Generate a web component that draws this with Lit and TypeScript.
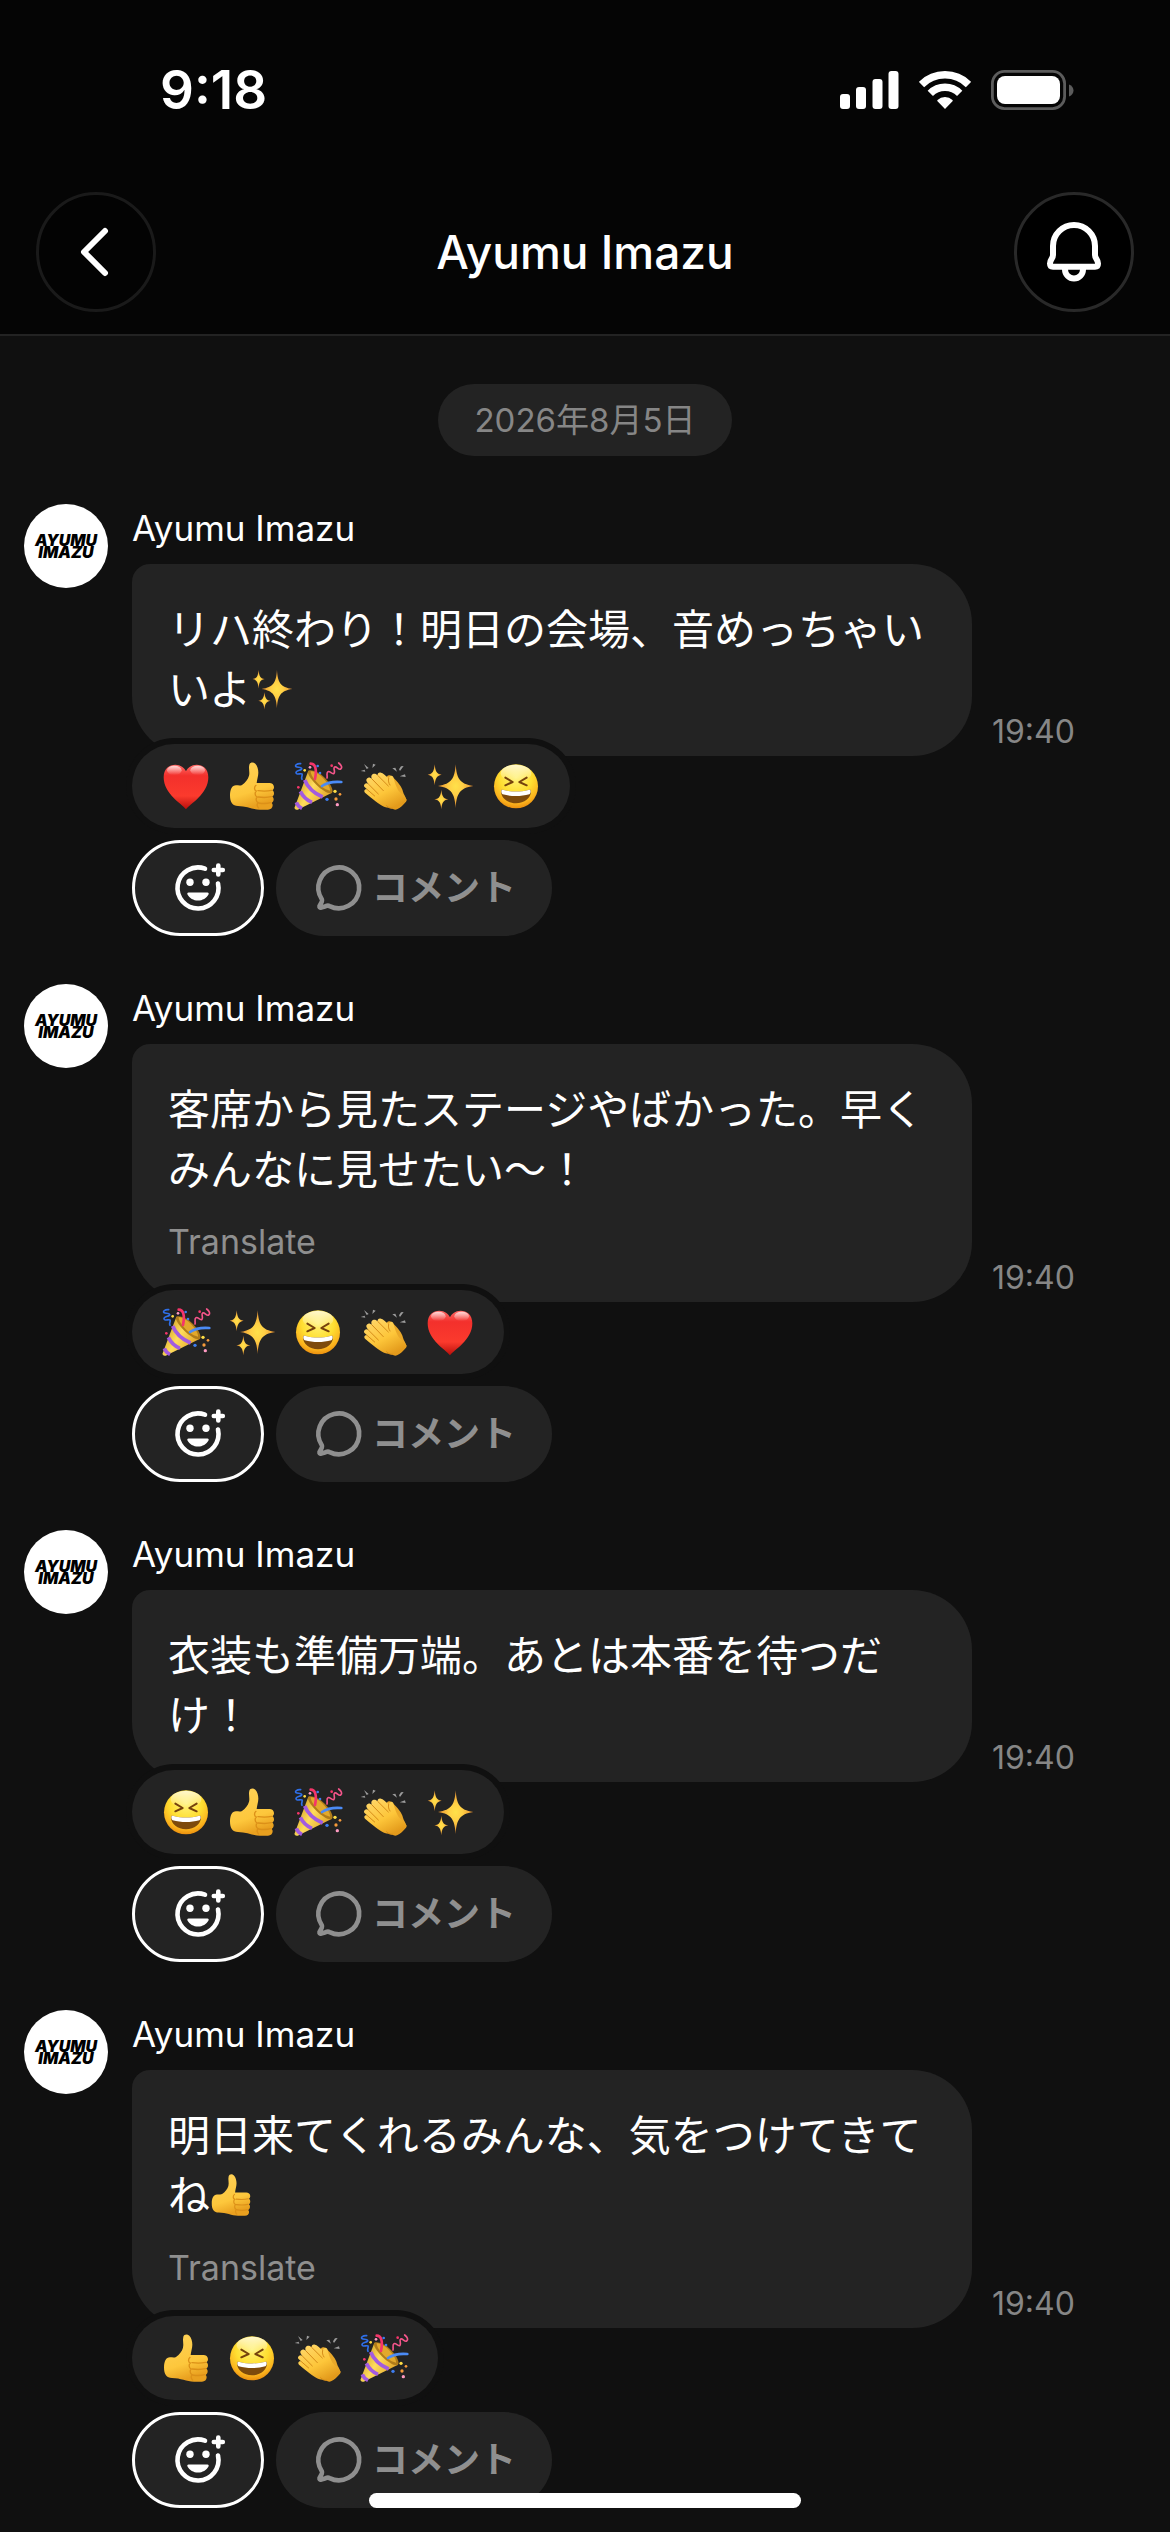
import { LitElement, html, svg, css } from "lit";
import type { TemplateResult } from "lit";
import { customElement, property } from "lit/decorators.js";

type EmojiName = "heart" | "thumb" | "party" | "clap" | "sparkles" | "laugh";

interface Message {
  text: string;
  emoji?: EmojiName;
  translate: boolean;
  reactions: EmojiName[];
}

const AUTHOR = "Ayumu Imazu";

const MESSAGES: Message[] = [
  {
    text: "リハ終わり！明日の会場、音めっちゃいいよ",
    emoji: "sparkles",
    translate: false,
    reactions: ["heart", "thumb", "party", "clap", "sparkles", "laugh"],
  },
  {
    text: "客席から見たステージやばかった。早くみんなに見せたい〜！",
    translate: true,
    reactions: ["party", "sparkles", "laugh", "clap", "heart"],
  },
  {
    text: "衣装も準備万端。あとは本番を待つだけ！",
    translate: false,
    reactions: ["laugh", "thumb", "party", "clap", "sparkles"],
  },
  {
    text: "明日来てくれるみんな、気をつけてきてね",
    emoji: "thumb",
    translate: true,
    reactions: ["thumb", "laugh", "clap", "party"],
  },
];

const EMOJI_LABEL: Record<EmojiName, string> = {
  heart: "❤️",
  thumb: "👍",
  party: "🎉",
  clap: "👏",
  sparkles: "✨",
  laugh: "😆",
};

/* Emoji artwork on a 144-unit grid. */
const EMOJI_ART: Record<EmojiName, TemplateResult> = {
  heart: svg`
    <defs>
      <linearGradient id="heart-fill" x1="0" y1="0" x2="0" y2="1">
        <stop offset="0" stop-color="#ff6a66" />
        <stop offset=".25" stop-color="#f3302c" />
        <stop offset=".7" stop-color="#fb3a2d" />
        <stop offset="1" stop-color="#b80f0b" />
      </linearGradient>
      <linearGradient id="heart-gloss" x1="0" y1="0" x2="0" y2="1">
        <stop offset="0" stop-color="#fff" stop-opacity=".75" />
        <stop offset="1" stop-color="#fff" stop-opacity="0" />
      </linearGradient>
    </defs>
    <path fill="url(#heart-fill)" d="M72 142C60 126 5 96 5 46 5 20 22 8 40 8c16 0 27 9 32 20C77 17 88 8 104 8c18 0 35 12 35 38 0 50-55 80-67 96z" />
    <ellipse cx="37" cy="25" rx="22" ry="14" fill="url(#heart-gloss)" />
    <ellipse cx="107" cy="25" rx="22" ry="14" fill="url(#heart-gloss)" />
  `,
  thumb: svg`
    <defs>
      <linearGradient id="thumb-fill" x1="0" y1="0" x2=".3" y2="1">
        <stop offset="0" stop-color="#ffd35a" />
        <stop offset=".7" stop-color="#fdc73c" />
        <stop offset="1" stop-color="#e9a01f" />
      </linearGradient>
    </defs>
    <path fill="url(#thumb-fill)" d="M64 8C66 0 76-1 82 5c6 6 9 17 9 27 0 10-4 20-5 31h38c8 0 14 5 14 12 0 5-2 8-5 10 4 2 5 6 5 9 0 5-2 8-5 10 3 2 4 5 4 8 0 6-3 9-6 11 2 2 3 4 3 7 0 8-6 13-14 13H96c-22 0-40-11-66-11C14 132 6 122 6 100c0-18 6-30 18-30 8 0 14 2 19-2 9-7 17-16 20-27 3-11-2-22 1-33z" />
    <g fill="none" stroke="#dc9018" stroke-width="4" stroke-linecap="round">
      <path d="M84 70c-6 5-6 14 1 17-5 4-5 14 2 18-4 5-3 14 3 17-4 4-3 12 2 16" />
      <path d="M90 86c14 2 28 2 41-1M90 105c14 2 28 2 40-1M92 123c12 2 26 2 36-1" />
    </g>
  `,
  party: svg`
    <defs>
      <linearGradient id="cone-fill" x1="0" y1=".2" x2="1" y2=".8">
        <stop offset="0" stop-color="#c79218" />
        <stop offset=".45" stop-color="#ffdc5c" />
        <stop offset="1" stop-color="#d9971c" />
      </linearGradient>
    </defs>
    <path fill="url(#cone-fill)" d="M43 26 2 136c-2 6 4 9 9 7L114 92z" />
    <path fill="#b07c1a" d="M43 26c10-4 32 4 50 22 17 17 27 38 21 44-7 6-29-6-47-24C49 50 38 32 43 26z" />
    <path fill="#e2a92c" d="M50 28c10 0 26 8 39 22 12 13 20 27 19 36-10-1-25-10-37-22C58 50 50 38 50 28z" />
    <path fill="none" stroke="#a25be0" stroke-width="11" d="M32 54c8 20 28 40 54 51M19 88c7 14 18 26 35 33M7 121c3 8 8 14 17 18" />
    <path fill="none" stroke="#f5356a" stroke-width="8" stroke-linecap="round" d="M50 5c14 0 19 16 13 46" />
    <path fill="none" stroke="#4b8bf5" stroke-width="8" stroke-linecap="round" d="M84 72c16-11 34-14 58-12" />
    <path fill="none" stroke="#2f6fe8" stroke-width="5" stroke-linecap="round" d="M20 5C8 4 2 10 6 14s14-1 17 5-18 5-17 13 14 1 18 4c3 5-4 8 0 16" />
    <path fill="none" stroke="#f5568b" stroke-width="5" stroke-linecap="round" d="M134 3c8 6 12 14 6 18s-12-9-18-6 3 14-2 19-12-8-18-5-1 13-3 19" />
    <g fill="#3e7df0"><circle cx="71" cy="12" r="4" /><circle cx="78" cy="33" r="4" /><circle cx="99" cy="112" r="5" /></g>
    <g fill="#ffdd45"><circle cx="32" cy="25" r="4" /><circle cx="123" cy="88" r="5" /></g>
    <g fill="#ff9ac2"><circle cx="48" cy="16" r="4" /><circle cx="130" cy="128" r="5" /></g>
    <g fill="#f5366a"><circle cx="113" cy="11" r="4" /><circle cx="13" cy="76" r="4" /></g>
    <g fill="#f79b3a"><circle cx="138" cy="97" r="4" /><circle cx="126" cy="111" r="5" /></g>
  `,
  clap: svg`
    <defs>
      <linearGradient id="clap-fill" x1="0" y1="0" x2=".6" y2="1">
        <stop offset="0" stop-color="#ffd970" />
        <stop offset=".6" stop-color="#fdc63a" />
        <stop offset="1" stop-color="#e39a1b" />
      </linearGradient>
    </defs>
    <path fill="#e9a829" d="M80 44c5-6 12-5 18 1 14 13 28 30 31 44 2 8 8 14 10 24L96 138z" />
    <path fill="url(#clap-fill)" d="M15 92c-5-6 0-12 6-10-9-8-11-10-7-15 3-4 7-4 11-1-7-8-8-13-3-17 4-4 9-2 14 2-4-7-2-12 3-15 5-2 10 0 14 4-1-6 4-10 10-8 6 1 12 8 23 17 4-9 11-10 14-3 3 9 5 22 13 36 6 12 17 16 26 29 2 3 1 6-1 8-8 10-17 18-27 23-4 2-8 1-12-1-8-5-17-3-27-7-14-6-35-24-57-42z" />
    <path fill="none" stroke="#d58b18" stroke-width="3" stroke-linecap="round" d="m25 66 30 30M36 51l34 35M53 40l32 32M21 82l23 20M86 49c-2 8 0 14 4 20M80 131c4 5 10 9 17 8" />
    <g fill="#9b9b9b">
      <path d="m2 27 12-4 2 6zM12 6l14 12-6 3zM37 18l2-13 8 3zM97 19l9-2 5 12zM117 22l6-9 8-1-11 15zM119 43l16-6 2 8z" />
    </g>
  `,
  sparkles: svg`
    <defs>
      <radialGradient id="spark-fill">
        <stop offset="0" stop-color="#ffe14a" />
        <stop offset=".4" stop-color="#ffcf45" />
        <stop offset="1" stop-color="#e58b2e" />
      </radialGradient>
    </defs>
    <g fill="url(#spark-fill)">
      <path d="M89 7c3 42 11 59 53 65-42 6-50 24-53 66-3-42-11-60-53-66 42-6 50-23 53-65z" />
      <path d="M26 7c2 20 5 29 21 31-16 3-19 12-21 32-2-20-5-29-21-32C21 36 24 27 26 7z" />
      <path d="M46 83c2 18 5 27 21 29-16 3-19 11-21 30-2-19-5-27-21-30 16-2 19-11 21-29z" />
    </g>
  `,
  laugh: svg`
    <defs>
      <radialGradient id="face-fill" cx=".5" cy=".3" r=".72">
        <stop offset="0" stop-color="#fff27a" />
        <stop offset=".5" stop-color="#ffdf32" />
        <stop offset=".82" stop-color="#fbb21d" />
        <stop offset="1" stop-color="#e8890c" />
      </radialGradient>
      <linearGradient id="face-gloss" x1="0" y1="0" x2="0" y2="1">
        <stop offset="0" stop-color="#fff" stop-opacity=".75" />
        <stop offset="1" stop-color="#fff" stop-opacity="0" />
      </linearGradient>
    </defs>
    <circle cx="72" cy="73" r="66" fill="url(#face-fill)" />
    <ellipse cx="72" cy="34" rx="46" ry="26" fill="url(#face-gloss)" />
    <path fill="none" stroke="#75420c" stroke-width="6" stroke-linecap="round" stroke-linejoin="round" d="m40 47 22 13-22 10M104 47 82 60l22 10" />
    <path fill="#7d4a0c" d="M27 88c0-5 4-5 8-4 24 6 50 6 74 0 4-1 8-1 8 4 0 20-20 36-45 36S27 108 27 88z" />
    <path fill="#fff" d="M28 87c0-4 4-4 7-3 24 6 50 6 74 0 3-1 7-1 7 3 0 4-1 8-4 10-26 7-54 7-80 0-3-2-4-6-4-10z" />
  `,
};

@customElement("chat-emoji")
export class ChatEmoji extends LitElement {
  @property() name: EmojiName = "heart";

  static styles = css`
    :host {
      display: inline-block;
      width: 48px;
      height: 48px;
    }
    .art {
      display: block;
      width: 100%;
      height: 100%;
      overflow: visible;
    }
  `;

  render() {
    return html`<svg class="art" viewBox="0 0 144 144" role="img" aria-label=${EMOJI_LABEL[this.name]}>
      ${EMOJI_ART[this.name]}
    </svg>`;
  }
}

@customElement("chat-message")
export class ChatMessage extends LitElement {
  @property({ attribute: false }) message!: Message;

  static styles = css`
    :host {
      display: block;
    }
    .message {
      display: grid;
      grid-template-columns: 84px minmax(0, 1fr);
      column-gap: 24px;
    }
    .avatar {
      display: grid;
      place-items: center;
      box-sizing: border-box;
      width: 84px;
      height: 84px;
      padding: 0 6px;
      border-radius: 50%;
      background: #fff;
      color: #000;
      text-align: center;
      font: italic 900 16px/12px Inter, "Liberation Sans", sans-serif;
    }
    .name {
      margin: 0 0 12px;
      color: #fff;
      font-size: 35px;
      font-weight: 400;
      line-height: 48px;
    }
    .row {
      display: flex;
      align-items: flex-end;
      gap: 20px;
    }
    .bubble {
      flex: 0 1 840px;
      box-sizing: border-box;
      padding: 36px;
      border-radius: 18px 60px 60px 60px;
      background: #232323;
    }
    .text {
      margin: 0;
      color: #fff;
      font-size: 42px;
      line-height: 60px;
    }
    .inline-emoji {
      width: 42px;
      height: 42px;
      vertical-align: -5px;
    }
    .translate {
      display: block;
      margin-top: 18px;
      padding: 0;
      border: 0;
      background: none;
      color: #8f8f8f;
      font: inherit;
      font-size: 34px;
      line-height: 48px;
    }
    .time {
      color: #868686;
      font-size: 32px;
      line-height: 48px;
    }
    .reactions {
      position: relative;
      display: flex;
      gap: 18px;
      width: fit-content;
      margin: -12px 0 12px;
      padding: 18px 30px;
      border: 0;
      border-radius: 42px;
      background: #232323;
      box-shadow: 0 0 0 6px #101010;
    }
    .actions {
      display: flex;
      gap: 12px;
    }
    .action {
      display: flex;
      align-items: center;
      justify-content: center;
      gap: 6px;
      box-sizing: border-box;
      height: 96px;
      padding: 0 36px;
      border: 0;
      border-radius: 48px;
      background: #232323;
      color: #8f8f8f;
      font: inherit;
      font-size: 36px;
      font-weight: 700;
      line-height: 48px;
    }
    .react {
      width: 132px;
      border: 3px solid #fff;
      color: #fff;
    }
    .icon {
      flex: none;
      width: 54px;
      height: 54px;
      overflow: visible;
    }
  `;

  render() {
    const { text, emoji, translate, reactions } = this.message;
    return html`
      <article class="message">
        <div class="avatar">AYUMU IMAZU</div>
        <div>
          <h2 class="name">${AUTHOR}</h2>
          <div class="row">
            <div class="bubble">
              <p class="text">${text}${emoji ? html`<chat-emoji class="inline-emoji" .name=${emoji}></chat-emoji>` : null}</p>
              ${translate ? html`<button class="translate" type="button">Translate</button>` : null}
            </div>
            <time class="time" datetime="19:40">19:40</time>
          </div>
          <button class="reactions" type="button">
            ${reactions.map((name) => html`<chat-emoji .name=${name}></chat-emoji>`)}
          </button>
          <div class="actions">
            <button class="action react" type="button" aria-label="リアクション">
              <svg class="icon" viewBox="0 0 54 54" fill="none" stroke="currentColor" stroke-width="4.6" stroke-linecap="round" aria-hidden="true">
                <path d="M34 7.700A20.500 20.500 0 1 0 47 22.500" />
                <path d="M47.300 4.500v9M42.800 9h9" />
                <circle cx="19" cy="21.300" r="3.700" fill="currentColor" stroke="none" />
                <circle cx="35" cy="21.300" r="3.700" fill="currentColor" stroke="none" />
                <path fill="currentColor" stroke="none" d="M17.500 31.500h19c1 0 1.500 1 1 1.900C35.500 37 31.500 39.500 27 39.500S18.500 37 16.500 33.400c-.5-.9 0-1.900 1-1.900z" />
              </svg>
            </button>
            <button class="action" type="button">
              <svg class="icon" viewBox="0 0 54 54" fill="none" stroke="currentColor" stroke-width="4.600" stroke-linejoin="round" aria-hidden="true">
                <path d="M9.800 38.200A20.400 20.400 0 1 1 17.600 45.100C16.300 44.400 15 44.600 13.600 45.200L9.200 46.600C8 47 7.300 46.200 7.500 45.100L9.900 40.500C10.300 39.700 10.200 39 9.800 38.200z" />
              </svg>
              <span>コメント</span>
            </button>
          </div>
        </div>
      </article>
    `;
  }
}

@customElement("app-root")
export class AppRoot extends LitElement {
  static styles = css`
    :host {
      display: block;
      position: relative;
      min-height: 100vh;
      background: #101010;
      color: #fff;
      font-family: Inter, "Noto Sans CJK JP", sans-serif;
    }
    .header {
      border-bottom: 2px solid #232323;
      background: #050505;
    }
    .status {
      display: flex;
      align-items: center;
      justify-content: space-between;
      height: 180px;
      padding: 0 96px 0 160px;
    }
    .clock {
      font-size: 53px;
      font-weight: 600;
      line-height: 60px;
    }
    .indicators {
      display: flex;
      align-items: center;
      gap: 20px;
    }
    .bar {
      display: grid;
      grid-template-columns: 120px minmax(0, 1fr) 120px;
      align-items: center;
      padding: 12px 36px 22px;
    }
    .title {
      margin: 0;
      text-align: center;
      font-size: 46px;
      font-weight: 500;
      line-height: 60px;
    }
    .round {
      display: flex;
      align-items: center;
      justify-content: center;
      box-sizing: border-box;
      width: 120px;
      height: 120px;
      padding: 0;
      border: 3px solid #1a1a1a;
      border-radius: 50%;
      background: #030303;
      color: #fff;
    }
    .bell {
      border-color: #292929;
      background: #000;
    }
    .feed {
      display: flex;
      flex-direction: column;
      gap: 48px;
      padding: 48px 24px 24px;
    }
    .date {
      align-self: center;
      padding: 12px 36px;
      border-radius: 36px;
      background: #232323;
      color: #868686;
      font-size: 33px;
      line-height: 48px;
    }
    .home {
      position: absolute;
      bottom: 24px;
      left: 50%;
      width: 432px;
      height: 15px;
      margin-left: -216px;
      border-radius: 8px;
      background: #fff;
    }
  `;

  render() {
    return html`
      <header class="header">
        <div class="status">
          <span class="clock">9:18</span>
          <div class="indicators">
            <svg width="59" height="38" viewBox="0 0 59 38" fill="#fff" aria-hidden="true">
              <rect x="0" y="23" width="10" height="15" rx="3" />
              <rect x="16" y="16" width="10" height="22" rx="3" />
              <rect x="32.500" y="8" width="10" height="30" rx="3" />
              <rect x="48.500" y="0" width="10" height="38" rx="3" />
            </svg>
            <svg width="52" height="38" viewBox="0 0 52 38" fill="none" stroke="#fff" stroke-width="7.500" aria-hidden="true">
              <path d="M2.500 13.500a33.300 33.300 0 0 1 47 0" />
              <path d="M11.300 22.300a20.800 20.800 0 0 1 29.400 0" />
              <path fill="#fff" stroke="none" d="M18.500 29a11 11 0 0 1 15 0c.4.400.4.900 0 1.300L26 38l-7.500-7.700c-.4-.4-.4-.9 0-1.300z" />
            </svg>
            <svg width="83" height="40" viewBox="0 0 83 40" aria-hidden="true">
              <rect x="1.400" y="1.400" width="72.200" height="37.200" rx="12" fill="none" stroke="#5c5c5c" stroke-width="2.800" />
              <rect x="6" y="6" width="63" height="28" rx="8" fill="#fff" />
              <path fill="#5c5c5c" d="M78 14.500c3 1 4.500 3.500 4.500 6s-1.500 5-4.500 6z" />
            </svg>
          </div>
        </div>
        <nav class="bar">
          <button class="round" type="button" aria-label="戻る">
            <svg width="72" height="72" viewBox="0 0 72 72" fill="none" stroke="#fff" stroke-width="6" stroke-linecap="round" stroke-linejoin="round" aria-hidden="true">
              <path d="M45 15 24 36l21 21" />
            </svg>
          </button>
          <h1 class="title">${AUTHOR}</h1>
          <button class="round bell" type="button" aria-label="通知">
            <svg width="72" height="72" viewBox="0 0 72 72" fill="none" stroke="#fff" stroke-width="6" stroke-linejoin="round" aria-hidden="true">
              <path d="M15 30a21 21 0 0 1 42 0V39c0 4 3 4 3 8.500 0 2-1 3.200-3 3.200H15c-2 0-3-1.200-3-3.200C12 43 15 43 15 39z" />
              <path d="M27 51v2.500a9 9 0 0 0 18 0V51" />
            </svg>
          </button>
        </nav>
      </header>
      <main class="feed">
        <time class="date" datetime="2026-08-05">2026年8月5日</time>
        ${MESSAGES.map((message) => html`<chat-message .message=${message}></chat-message>`)}
      </main>
      <div class="home"></div>
    `;
  }
}
